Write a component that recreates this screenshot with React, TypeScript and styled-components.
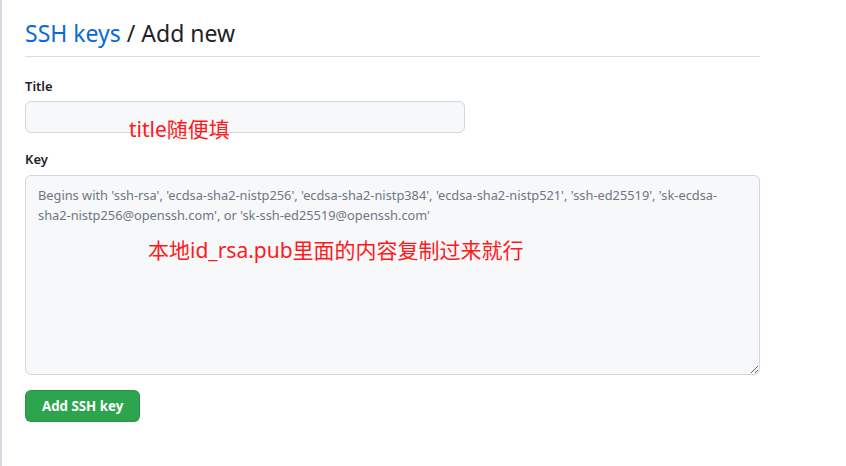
import React from "react";
import styled, { createGlobalStyle } from "styled-components";

const Global = createGlobalStyle`
  html, body { margin: 0; padding: 0; background: #ffffff; }
  body { font-family: "Noto Sans", "Liberation Sans", "Noto Sans CJK SC", sans-serif; }
`;

const Page = styled.div`
  position: relative;
  width: 846px;
  height: 466px;
  box-sizing: border-box;
  border-left: 2px solid #d4dae2;
  padding: 15px 0 0 23px;
  overflow: hidden;
`;

const Column = styled.div`
  width: 735px;
  display: flex;
  flex-direction: column;
`;

const Heading = styled.h2`
  margin: 0;
  font-size: 23px;
  font-weight: 400;
  line-height: 36px;
  color: #1f2328;
  padding-bottom: 5px;
  border-bottom: 1px solid #d8dee4;
`;

const Crumb = styled.a`
  color: #0969da;
  text-decoration: none;
`;

const Label = styled.label<{ $top: number }>`
  display: block;
  margin-top: ${(p) => p.$top}px;
  font-size: 13px;
  font-weight: 600;
  line-height: 20px;
  color: #1f2328;
`;

const Input = styled.input`
  box-sizing: border-box;
  margin-top: 5px;
  width: 440px;
  height: 32px;
  background: #f6f8fa;
  border: 1px solid #d0d7de;
  border-radius: 6px;
  outline: none;
`;

const TextArea = styled.textarea`
  box-sizing: border-box;
  margin-top: 6px;
  width: 735px;
  height: 200px;
  padding: 9px 12px;
  background: #f6f8fa;
  border: 1px solid #d0d7de;
  border-radius: 6px;
  font-family: "Noto Sans", "Liberation Sans", sans-serif;
  font-size: 12.8px;
  line-height: 20px;
  color: #1f2328;
  outline: none;
  resize: vertical;
  &::placeholder { color: #6e7781; }
`;

const Button = styled.button`
  align-self: flex-start;
  margin-top: 15px;
  height: 32px;
  padding: 0 16px;
  background: #2da44e;
  border: 1px solid rgba(27, 31, 36, 0.15);
  border-radius: 6px;
  color: #ffffff;
  font-family: "Noto Sans", "Liberation Sans", sans-serif;
  font-size: 13.3px;
  font-weight: 700;
`;

const Note = styled.div<{ $x: number; $y: number }>`
  position: absolute;
  left: ${(p) => p.$x}px;
  top: ${(p) => p.$y}px;
  color: #ff1a1a;
  font-family: "Noto Sans", "Noto Sans CJK SC", sans-serif;
  font-size: 21px;
  line-height: 24px;
  white-space: nowrap;
`;

export default function App() {
  return (
    <>
      <Global />
      <Page>
        <Column>
          <Heading>
            <Crumb href="#">SSH keys</Crumb> / Add new
          </Heading>
          <Label $top={19}>Title</Label>
          <Input />
          <Label $top={16}>Key</Label>
          <TextArea placeholder="Begins with 'ssh-rsa', 'ecdsa-sha2-nistp256', 'ecdsa-sha2-nistp384', 'ecdsa-sha2-nistp521', 'ssh-ed25519', 'sk-ecdsa-sha2-nistp256@openssh.com', or 'sk-ssh-ed25519@openssh.com'" />
          <Button>Add SSH key</Button>
        </Column>
        <Note $x={127} $y={117}>title随便填</Note>
        <Note $x={146} $y={238}>本地id_rsa.pub里面的内容复制过来就行</Note>
      </Page>
    </>
  );
}
